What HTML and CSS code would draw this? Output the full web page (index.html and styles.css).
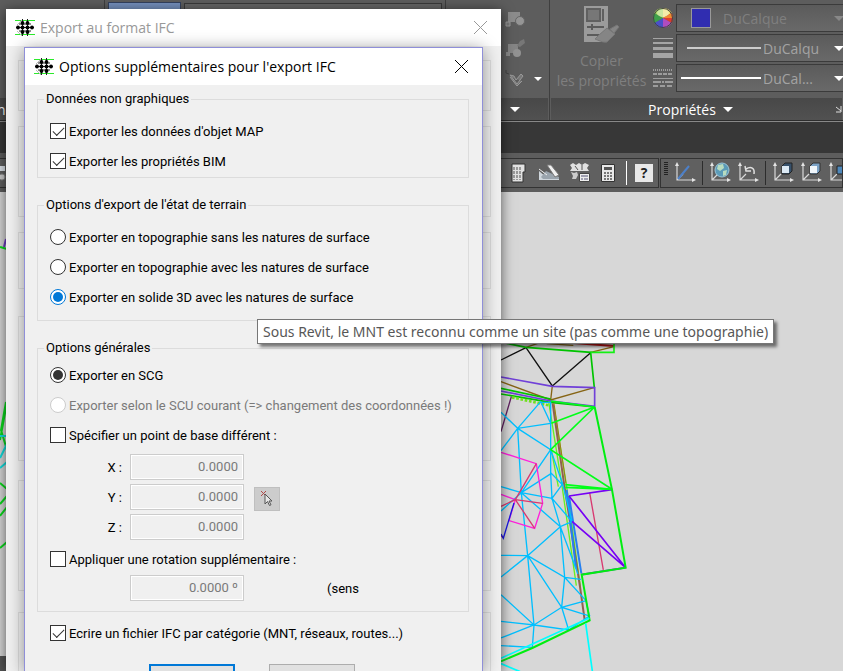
FILE: index.html
```html
<!DOCTYPE html>
<html lang="fr">
<head>
    <meta charset="UTF-8">
    <meta name="viewport" content="width=device-width, initial-scale=1.0">
    <title>Options supplémentaires pour l'export IFC</title>
    <link rel="stylesheet" href="styles.css">
</head>
<body>
    <!-- shared symbols -->
    <svg class="symbols" aria-hidden="true">
        <symbol id="logo" viewBox="0 0 20 18">
            <path d="M0 1.500h20M0 15.500h20" stroke="#2bea2b"/>
            <path d="M2 6l5-5M2 12l5 5" stroke="#bbb"/>
            <path d="M7.500 0v17M12.500 0v17M1 8.500h18M4 5h12M4 12h12" stroke="#222"/>
            <g fill="#000">
                <circle cx="7.500" cy="4" r="1.900"/><circle cx="12.500" cy="4" r="1.900"/>
                <circle cx="3" cy="8.500" r="1.900"/><circle cx="7.500" cy="8.500" r="2"/><circle cx="12.500" cy="8.500" r="2"/><circle cx="17" cy="8.500" r="1.900"/>
                <circle cx="7.500" cy="13" r="1.900"/><circle cx="12.500" cy="13" r="1.900"/>
            </g>
        </symbol>
        <symbol id="axes" viewBox="0 0 22 22">
            <path d="M3 3v15h15M3 18l6-6" fill="none" stroke="#d8d8d8" stroke-width="1.2"/>
            <path d="M3 0l2 4H1zM22 18l-4-2v4z" fill="#e4e4e4"/>
        </symbol>
    </svg>

    <div class="app">
        <header class="ribbon">
            <section class="panel panel-first">
                <div class="panel-body"></div>
                <div class="panel-title">no</div>
            </section>
            <section class="panel panel-layers">
                <div class="panel-body">
                    <div class="layer-btn"></div>
                    <div class="layer-combo"></div>
                </div>
                <div class="panel-title"></div>
            </section>
            <section class="panel panel-block">
                <div class="panel-body">
                    <svg width="22" height="20" viewBox="0 0 22 20"><path d="M3 3h12v10H3z" fill="#8c8c8c"/><circle cx="15" cy="12" r="4.500" fill="#959595" stroke="#666"/><path d="M1 13h4v4H1z" fill="#777" stroke="#999"/></svg>
                    <svg width="22" height="20" viewBox="0 0 22 20"><path d="M3 5h10v9H3z" fill="#858585"/><path d="M12 7l3-5 4-2 1 4-5 4z" fill="#777"/><circle cx="12" cy="14" r="4" fill="#929292"/><path d="M1 13h4v4H1z" fill="#888"/></svg>
                    <div class="tool-drop">
                        <svg width="22" height="20" viewBox="0 0 22 20"><path d="M1 1v3l3 1" fill="none" stroke="#444"/><path d="M5 6l4 1 2 4 5-6 2 2-6 8zM5 8l7 9 5-5" fill="#777" stroke="#999"/></svg>
                        <i class="arrow arrow-small"></i>
                    </div>
                </div>
                <div class="panel-title"><i class="arrow"></i></div>
            </section>
            <section class="panel panel-props">
                <div class="panel-body">
                    <button class="copy-btn" type="button" disabled>
                        <svg width="38" height="40" viewBox="0 0 38 40">
                            <path d="M1 1h24v36H1z" fill="#9b9b9b"/>
                            <path d="M4 4h13v12H4zM20 4v12" fill="#777" stroke="#606060" stroke-width="2"/>
                            <path d="M4 22h17M9 19v6M4 30h12" stroke="#5b5b5b" stroke-width="2"/>
                            <path d="M16 30l8-7 8 6-8 8c-4 1-9-2-12-3zM27 24l7-4 2 2-5 6z" fill="#858585" stroke="#777"/>
                        </svg>
                        <span>Copier</span>
                        <span>les propriétés</span>
                    </button>
                    <div class="props">
                        <svg width="20" height="20" viewBox="0 0 20 20">
                            <path d="M10 10V0a10 10 0 0 1 8.700 5z" fill="#efe070"/><path d="M10 10l8.700-5a10 10 0 0 1 0 10z" fill="#e03a2c"/>
                            <path d="M10 10l8.700 5a10 10 0 0 1-8.700 5z" fill="#b04cc0"/><path d="M10 10v10a10 10 0 0 1-8.700-5z" fill="#4a50c8"/>
                            <path d="M10 10l-8.700 5a10 10 0 0 1 0-10z" fill="#3fa04a"/><path d="M10 10L1.300 5A10 10 0 0 1 10 0z" fill="#a8d860"/>
                            <path d="M10 10l8.700-5 1 5z" fill="#f08a30"/><circle cx="10" cy="10" r="9.500" fill="none" stroke="#444"/>
                            <ellipse cx="10" cy="5" rx="6" ry="4" fill="#fff" opacity=".4"/>
                        </svg>
                        <div class="combo combo-off">
                            <span class="swatch"></span><span class="combo-text">DuCalque</span><i class="arrow"></i>
                        </div>
                        <svg width="20" height="20" viewBox="0 0 20 20"><path d="M0 .5h20" stroke="#a5a5a5"/><path d="M0 5h20" stroke="#a5a5a5" stroke-width="2"/><path d="M0 10.500h20" stroke="#a5a5a5" stroke-width="3"/><path d="M0 17.500h20" stroke="#a5a5a5" stroke-width="5"/></svg>
                        <div class="combo">
                            <span class="sample sample-short"></span><span class="combo-text">DuCalqu</span><i class="arrow"></i>
                        </div>
                        <svg width="20" height="20" viewBox="0 0 20 20"><g stroke="#9c9c9c"><path d="M0 2h20" stroke-width="2" stroke-dasharray="1 1"/><path d="M0 6h20" stroke-width="2" stroke-dasharray="4 1"/><path d="M0 10.500h20"/><path d="M0 14h20" stroke-width="2" stroke-dasharray="8 1 2 1"/><path d="M0 18h20" stroke-width="2" stroke-dasharray="5 2"/></g></svg>
                        <div class="combo">
                            <span class="sample"></span><span class="combo-text">DuCal...</span><i class="arrow"></i>
                        </div>
                    </div>
                </div>
                <div class="panel-title">
                    <span>Propriétés</span><i class="arrow"></i>
                    <svg class="launcher" width="6" height="7" viewBox="0 0 6 7"><path d="M0 1l5 4M5 0v6H0" fill="none" stroke="#ddd"/></svg>
                </div>
            </section>
        </header>
        <div class="tab-strip"></div>
        <div class="toolbars">
            <div class="toolbar toolbar-main">
                <svg class="first-tool" width="6" height="22" viewBox="0 0 6 22"><path d="M0 4h5v5H0z" fill="#dde3ea"/><circle cx="2" cy="15" r="3" fill="#ccc" stroke="#888"/></svg>
                <svg width="18" height="22" viewBox="0 0 18 22"><path d="M2 2h13v8h-2v10H2z" fill="#e2e2e2" stroke="#333"/><path d="M4 5v13M7 5v13M10 5v13" stroke="#999" stroke-width="2" stroke-dasharray="3 1"/></svg>
                <svg width="20" height="22" viewBox="0 0 20 22"><path d="M0 9l7 6h13v3H0z" fill="#cfd6dc"/><path d="M2 15l5-6 13 6v2H4z" fill="#9aa4ad"/><path d="M8 3h4l8 10-4 2z" fill="#f0f0f0" stroke="#777"/><path d="M0 7l8 6" stroke="#eee"/></svg>
                <svg width="20" height="22" viewBox="0 0 20 22"><path d="M0 3l3-2 3 2 3-2 3 2 3-2 4 2-2 3 2 3H0l2-3z" fill="#e0e0e0"/><path d="M1 10l3 1 3-1 1 3-2 4H2l1-3z" fill="#ccc"/><path d="M9.500 11.500h10v8h-10z" fill="#eee" stroke="#444"/><path d="M11 14h7M11 17h2M14 17h4" stroke="#557"/><path d="M5 4l3 4M12 3v5" stroke="#555"/></svg>
                <svg width="14" height="22" viewBox="0 0 14 22"><path d="M.5 2.500h13v17H.5z" fill="#e8e8e8" stroke="#333"/><path d="M3 5h8v3H3z" fill="#555"/><path d="M3 11h8M3 14h8M3 17h8" stroke="#777" stroke-width="2" stroke-dasharray="2 1"/></svg>
                <i class="bar bar-light"></i>
                <span class="help">?</span>
            </div>
            <div class="toolbar toolbar-ucs">
                <i class="grip"></i>
                <svg width="22" height="22"><use href="#axes"/><path d="M4 17L15 4" stroke="#4d80c8" stroke-width="2"/></svg>
                <i class="bar"></i>
                <svg width="22" height="22"><use href="#axes"/><circle cx="13" cy="8" r="7" fill="#5b9bb8" stroke="#9ac4d8"/><path d="M9 3l5-1 1 4-4 3-3-2zM14 9l4-1-1 5-3 1z" fill="#b8dcc0"/></svg>
                <svg width="22" height="22"><use href="#axes"/><path d="M9 7c5-3 9-1 8 5M8 4l1 5 5 0" fill="none" stroke="#e0e0e0" stroke-width="1.500"/></svg>
                <i class="bar"></i>
                <svg width="22" height="22"><use href="#axes"/><path d="M10 4l3-3h7v8l-3 3h-7z" fill="#37516b" stroke="#222"/><path d="M10 4h7v7h-7z" fill="#dce9f3"/></svg>
                <svg width="22" height="22"><use href="#axes"/><path d="M10 4l3-3h7v8l-3 3h-7z" fill="#7ba2c6" stroke="#333"/><path d="M10 4h7v7h-7z" fill="#f0f6fb"/></svg>
                <svg width="22" height="22"><use href="#axes"/><path d="M9 4h9v8H9z" fill="#4f88bb" stroke="#222"/></svg>
            </div>
        </div>
        <main class="canvas">
            <svg class="drawing" width="100%" height="100%">
                <!-- survey, drawn at 3 units per pixel -->
                <g transform="translate(490 128) scale(.3333)" fill="none" stroke-width="4">
                    <path stroke="#c01515" stroke-width="6" d="M250 69L372 78"/>
                    <path stroke="#866414" d="M33 185L182 240L312 203M187 198L182 240M108 82L150 68M302 97L372 80M170 71L250 76"/>
                    <path stroke="#111" d="M33 120L108 83L187 198L302 98"/>
                    <path stroke="#00c400" stroke-width="5" d="M50 70L108 82L302 97L313 203M33 205L182 237M33 222L182 247L314 261"/>
                    <path stroke="#14f014" stroke-width="5" d="M302 97H372V69"/>
                    <path stroke="#7040d8" stroke-width="5" d="M33 171L187 199L314 203V259L183 243L33 213"/>
                    <path stroke="#602060" d="M64 230L33 335"/>
                    <path stroke="#70e020" stroke-width="8" stroke-dasharray="8 5" d="M66 232L176 256"/>
                    <path stroke="#66f020" d="M176 245L215 490L259 797M192 260L230 500L271 800M184 390L205 500"/>
                    <path stroke="#906050" stroke-width="6" d="M188 250L222 490L270 800L284 900"/>
                    <path stroke="#a07818" stroke-width="3" d="M192 250L228 490"/>
                    <path stroke="#2680f0" stroke-width="6" d="M237 528L274 760M230 510L258 745"/>
                    <path stroke="#00bfff" stroke-width="4" d="M33 277L83 325L182 310M83 325L152 245L182 310M83 325L33 392M83 325L94 518L33 500M83 325L182 389L94 518L184 460L218 495M182 245V460L186 535L218 492L182 389M152 247H182M94 518L186 535L246 605M94 518L33 573M94 518L113 707L33 706M94 518L211 620L113 707L33 771M186 535L211 620L246 605L218 492M113 707L132 915L33 904M113 707L224 772L211 620L264 762M113 707L215 862L224 772L288 842L215 862L132 915L33 824M224 772L273 778M132 915L127 982L33 977M132 915L236 930L215 862L298 888L236 930M132 915L33 954M288 842L298 888"/>
                    <path stroke="#ff20dc" d="M33 397L139 431L158 550L134 625L57 602L76 539L33 523"/>
                    <path stroke="#d83870" d="M139 431L76 539L33 559M76 539L158 550M76 539L134 625M299 518L340 750M33 648L40 653"/>
                    <path stroke="#1b18e8" d="M72 549L40 655L33 642"/>
                    <path stroke="#7600f5" stroke-width="5" d="M237 528L366 509M237 528L407 743L246 604M273 764L407 743"/>
                    <path stroke="#00ff18" stroke-width="5" d="M182 243L314 261L184 310M314 261L182 389L366 508L226 494M226 502L366 508"/>
                    <path stroke="#00ee10" stroke-width="6" d="M314 261L366 509L407 743L275 764L299 901L127 984L33 1024"/>
                    <path stroke="#00ffff" stroke-width="5" d="M33 1015L298 894M33 1031L90 1055M287 910L308 1060"/>
                </g>
                <!-- strip left of the dialogs -->
                <g transform="translate(0 -192)" fill="none" stroke="#0adc1c" stroke-width="2">
                    <path d="M0 247l7 2M6 402L1 430l6 20M0 440l7-38M0 483l7 6M0 504l7-8M0 516l7-9M0 548l7-6"/>
                    <path stroke="#703cc8" d="M4 247l2-8"/>
                    <path stroke="#10e0e0" d="M0 458l7-14M0 468l7-6M0 436h6"/>
                </g>
            </svg>
        </main>
        <footer class="status"></footer>
    </div>

    <div class="window window-back">
        <div class="titlebar">
            <svg width="20" height="18"><use href="#logo"/></svg>
            <h2>Export au format IFC</h2>
            <button class="close" type="button" aria-label="Fermer"><svg width="13" height="13"><path d="M0 0l13 13M13 0L0 13" stroke="currentColor"/></svg></button>
        </div>
        <div class="back-groups">
            <div></div><div></div><div></div><div></div><div></div><div></div>
        </div>
    </div>

    <div class="window window-front">
        <div class="titlebar">
            <svg width="20" height="18"><use href="#logo"/></svg>
            <h1>Options supplémentaires pour l'export IFC</h1>
            <button class="close" type="button" aria-label="Fermer"><svg width="13" height="13"><path d="M0 0l13 13M13 0L0 13" stroke="currentColor"/></svg></button>
        </div>
        <form>
            <fieldset>
                <legend>Données non graphiques</legend>
                <label class="row"><input type="checkbox" checked>Exporter les données d'objet MAP</label>
                <label class="row"><input type="checkbox" checked>Exporter les propriétés BIM</label>
            </fieldset>
            <fieldset class="terrain">
                <legend>Options d'export de l'état de terrain</legend>
                <label class="row"><input type="radio" name="terrain">Exporter en topographie sans les natures de surface</label>
                <label class="row"><input type="radio" name="terrain">Exporter en topographie avec les natures de surface</label>
                <label class="row"><input class="hot" type="radio" name="terrain" checked>Exporter en solide 3D avec les natures de surface</label>
            </fieldset>
            <fieldset class="general">
                <legend>Options générales</legend>
                <label class="row"><input type="radio" name="scu" checked>Exporter en SCG</label>
                <label class="row off"><input type="radio" name="scu" disabled>Exporter selon le SCU courant (=&gt; changement des coordonnées !)</label>
                <label class="row"><input type="checkbox">Spécifier un point de base différent :</label>
                <div class="coords">
                    <label for="x">X :</label><input id="x" type="text" value="0.0000" disabled>
                    <label for="y">Y :</label><input id="y" type="text" value="0.0000" disabled>
                    <button class="pick" type="button" aria-label="Choisir un point" disabled>
                        <svg width="16" height="16" viewBox="0 0 16 16"><path d="M2 0l5 5M7 0L2 5" stroke="#b04848"/><path d="M6 3v10l2.500-2.500 2 4 1.500-.7-2-3.800h3z" fill="#e6e6e6" stroke="#555"/></svg>
                    </button>
                    <label for="z">Z :</label><input id="z" type="text" value="0.0000" disabled>
                </div>
                <label class="row"><input type="checkbox">Appliquer une rotation supplémentaire :</label>
                <div class="rotation">
                    <input type="text" value="0.0000 º" aria-label="Rotation" disabled>
                    <span>(sens</span>
                </div>
            </fieldset>
            <label class="row row-file"><input type="checkbox" checked>Ecrire un fichier IFC par catégorie (MNT, réseaux, routes...)</label>
            <div class="actions">
                <button class="btn btn-default" type="button" aria-label="Valider"></button>
                <button class="btn" type="button" aria-label="Annuler"></button>
            </div>
        </form>
    </div>

    <div class="tooltip" role="tooltip">Sous Revit, le MNT est reconnu comme un site (pas comme une topographie)</div>
</body>
</html>
```

FILE: styles.css
```css
* {
    box-sizing: border-box;
}
body {
    margin: 0;
    height: 100vh;
    overflow: hidden;
    position: relative;
    font-family: "Open Sans", "Noto Sans", sans-serif;
    font-size: 14px;
    background: #d7d7d7;
}
svg {
    display: block;
    flex: none;
}
button {
    font: inherit;
    padding: 0;
}
.symbols {
    position: absolute;
    width: 0;
    height: 0;
}
.app {
    height: 100%;
    display: flex;
    flex-direction: column;
}

/* ribbon */
.ribbon {
    display: flex;
    height: 120px;
    flex: none;
    background: #5d5d5d;
    overflow: hidden;
}
.panel {
    display: flex;
    flex-direction: column;
    flex: none;
    border-right: 1px solid #3f3f3f;
}
.panel-first {
    width: 105px;
}
.panel-layers {
    width: 341px;
}
.panel-block {
    width: 104px;
}
.panel-props {
    flex: 1;
    min-width: 0;
    border-right: 0;
}
.panel-body {
    height: 98px;
    display: flex;
}
.panel-title {
    position: relative;
    flex: 1;
    display: flex;
    align-items: center;
    justify-content: center;
    gap: 7px;
    margin: 0 1px;
    color: #fff;
    background: linear-gradient(#484848, #515151);
}
.panel-first .panel-title {
    justify-content: flex-start;
    margin: 0;
    text-indent: -3px;
}
.layer-btn {
    width: 73px;
    height: 30px;
    margin: 2px 3px;
    border: 1px solid #33415e;
    background: #7590bd;
}
.layer-combo {
    flex: 1;
    height: 30px;
    margin: 3px 3px 0 0;
    border: 1px solid #393939;
    background: #666;
}
.panel-block .panel-body {
    flex-direction: column;
    gap: 10px;
    padding: 9px 0 0 59px;
}
.panel-block .panel-title {
    justify-content: flex-end;
    padding-right: 28px;
}
.tool-drop {
    display: flex;
    align-items: center;
    gap: 7px;
}
.arrow {
    flex: none;
    border: 5px solid transparent;
    border-top-color: #fff;
    border-bottom: 0;
}
.arrow-small {
    border-width: 4px 4px 0;
}
.copy-btn {
    width: 103px;
    display: flex;
    flex-direction: column;
    align-items: center;
    border: 0;
    padding-top: 5px;
    line-height: 20px;
    color: #7f7f7f;
    background: none;
    white-space: nowrap;
}
.copy-btn svg {
    margin-bottom: 6px;
}
.props {
    flex: 1;
    display: grid;
    grid-template-columns: 20px 1fr;
    grid-template-rows: 28px 28px 28px;
    gap: 2px 3px;
    padding-top: 4px;
    align-items: center;
}
.combo {
    height: 28px;
    display: flex;
    align-items: center;
    border: 1px solid #3b3b3b;
    border-right: 0;
    color: #a3a3a3;
    background: linear-gradient(#5b5b5b, #696969);
}
.combo .arrow {
    margin: 0 -1px 0 auto;
}
.combo-off {
    color: #7f7f7f;
}
.combo-off .arrow {
    border-top-color: #888;
}
.swatch {
    width: 20px;
    height: 20px;
    margin: 0 12px 0 14px;
    border: 1px solid #999;
    background: #302db0;
}
.sample {
    width: 80px;
    height: 2px;
    margin: 0 2px 0 4px;
    background: #fff;
}
.sample-short {
    width: 74px;
    margin-left: 10px;
    background: #ccc;
}
.launcher {
    position: absolute;
    right: 0;
    top: 8px;
}
.panel-props .panel-title {
    padding-right: 12px;
}

.tab-strip {
    flex: none;
    height: 33px;
    border-top: 1px solid #2d2d2d;
    background: #373737;
    box-shadow: inset 0 1px #888;
}

/* toolbars */
.toolbars {
    flex: none;
    height: 39px;
    display: flex;
    gap: 1px;
    padding: 5px 0 4px;
    background: #5d5d5d;
}
.toolbar {
    display: flex;
    align-items: center;
    border: 1px solid #333;
    background: #606060;
}
.toolbar-main {
    width: 659px;
    flex: none;
    gap: 11px;
    padding-right: 5px;
    border-left: 0;
}
.first-tool {
    margin-right: auto;
}
.toolbar-ucs {
    flex: 1;
    min-width: 0;
    overflow: hidden;
    gap: 6px;
    padding-left: 3px;
}
.bar {
    flex: none;
    width: 1px;
    height: 24px;
    background: #2c2c2c;
}
.bar-light {
    margin-right: -3px;
    background: #fff;
}
.help {
    width: 18px;
    line-height: 18px;
    text-align: center;
    font-weight: bold;
    color: #222;
    background: #e8e8e8;
}
.grip {
    flex: none;
    width: 4px;
    height: 14px;
    margin-bottom: 8px;
    background: repeating-linear-gradient(#222 0 1px, #606060 1px 2px);
}

.canvas {
    flex: 1;
    min-height: 0;
    background: #d7d7d7;
}
.drawing {
    overflow: hidden;
}
.status {
    position: absolute;
    left: 0;
    bottom: 0;
    width: 20px;
    height: 15px;
    background: #555;
}

/* windows */
.window {
    position: absolute;
    bottom: 0;
    overflow: hidden;
    background: #f0f0f0;
}
.window-back {
    left: 6px;
    top: 9px;
    width: 495px;
    color: #999;
    box-shadow: 0 2px 12px rgba(0, 0, 0, 0.6);
}
.window-front {
    left: 24px;
    top: 47px;
    width: 459px;
    border: 1px solid #8f8fd8;
    border-bottom: 0;
    color: #000;
    box-shadow: 0 2px 16px rgba(0, 0, 0, 0.4);
}
.titlebar {
    display: flex;
    align-items: center;
    gap: 5px;
    height: 37px;
    padding: 0 14px 0 9px;
    background: #fff;
}
.titlebar h1,
.titlebar h2 {
    flex: 1;
    margin: 0;
    font-size: 14px;
    font-weight: normal;
}
.close {
    border: 0;
    color: inherit;
    background: none;
}
.back-groups {
    padding: 14px 10px 0 12px;
}
.back-groups div {
    height: 91px;
    margin-bottom: 15px;
    border: 1px solid #dcdcdc;
}
.back-groups div:nth-child(1) {
    height: 51px;
}
.back-groups div:nth-child(3) {
    height: 57px;
    margin-bottom: 27px;
}
.back-groups div:nth-child(4) {
    height: 145px;
    margin-bottom: 19px;
}
.back-groups div:nth-child(5) {
    height: 111px;
    margin-bottom: 21px;
}

/* form */
form {
    padding: 6px 13px 0 12px;
    font-family: Roboto, sans-serif;
    font-size: 13px;
}
fieldset {
    margin: 0 0 19px;
    padding: 9px 12px 1px;
    border: 1px solid #dcdcdc;
}
legend {
    margin-left: -6px;
    padding: 0 2px;
    line-height: 16px;
}
.terrain {
    padding-bottom: 8px;
}
.general {
    margin-bottom: 6px;
    padding-top: 4px;
    padding-bottom: 9px;
}
.row {
    display: flex;
    align-items: center;
    gap: 3px;
    height: 30px;
    white-space: nowrap;
}
.off {
    color: #7a7a7a;
}
.row input {
    appearance: none;
    flex: none;
    width: 16px;
    height: 16px;
    margin: 0;
    border: 1px solid #333;
    background: #fff;
    display: grid;
    place-content: center;
}
.row input[type="radio"] {
    border-radius: 50%;
}
.row input[type="radio"]:checked::before {
    content: "";
    width: 10px;
    height: 10px;
    border-radius: 50%;
    background: #333;
}
.row input[type="checkbox"]:checked::before {
    content: "";
    width: 10px;
    height: 5px;
    margin-bottom: 3px;
    border: solid #333;
    border-width: 0 0 1px 1px;
    transform: rotate(-45deg);
}
.row input.hot {
    border-color: #0078d7;
}
.row input.hot:checked::before {
    background: #0078d7;
}
.row input:disabled {
    border-color: #ccc;
}
.coords {
    display: grid;
    grid-template-columns: 72px 114px 26px;
    grid-auto-rows: 30px;
    column-gap: 8px;
    align-items: center;
    margin: 2px 0;
}
.coords label {
    grid-column: 1;
    text-align: right;
}
.coords input,
.rotation input {
    width: 114px;
    height: 26px;
    padding: 0 5px 2px;
    border: 1px solid #ccc;
    box-shadow: inset 0 0 0 1px #fff;
    text-align: right;
    font: inherit;
    color: #7a7a7a;
    background: #f0f0f0;
}
.pick {
    width: 26px;
    height: 24px;
    margin: 4px 0 0 2px;
    border: 1px solid #bfbfbf;
    background: #ccc;
    display: grid;
    place-content: center;
}
.rotation {
    display: flex;
    align-items: center;
    gap: 83px;
    height: 28px;
    padding-left: 80px;
}
.row-file {
    padding-left: 13px;
}
.actions {
    display: flex;
    gap: 34px;
    padding: 16px 0 0 112px;
}
.btn {
    width: 86px;
    height: 26px;
    border: 1px solid #adadad;
    background: #e1e1e1;
}
.btn-default {
    border: 2px solid #0078d7;
}

.tooltip {
    position: absolute;
    left: 257px;
    top: 319px;
    padding: 0 5px;
    border: 1px solid #767676;
    font-family: "Noto Sans", sans-serif;
    line-height: 23px;
    white-space: nowrap;
    color: #575757;
    background: #fff;
    box-shadow: 3px 3px 3px rgba(0, 0, 0, 0.5);
}
```
